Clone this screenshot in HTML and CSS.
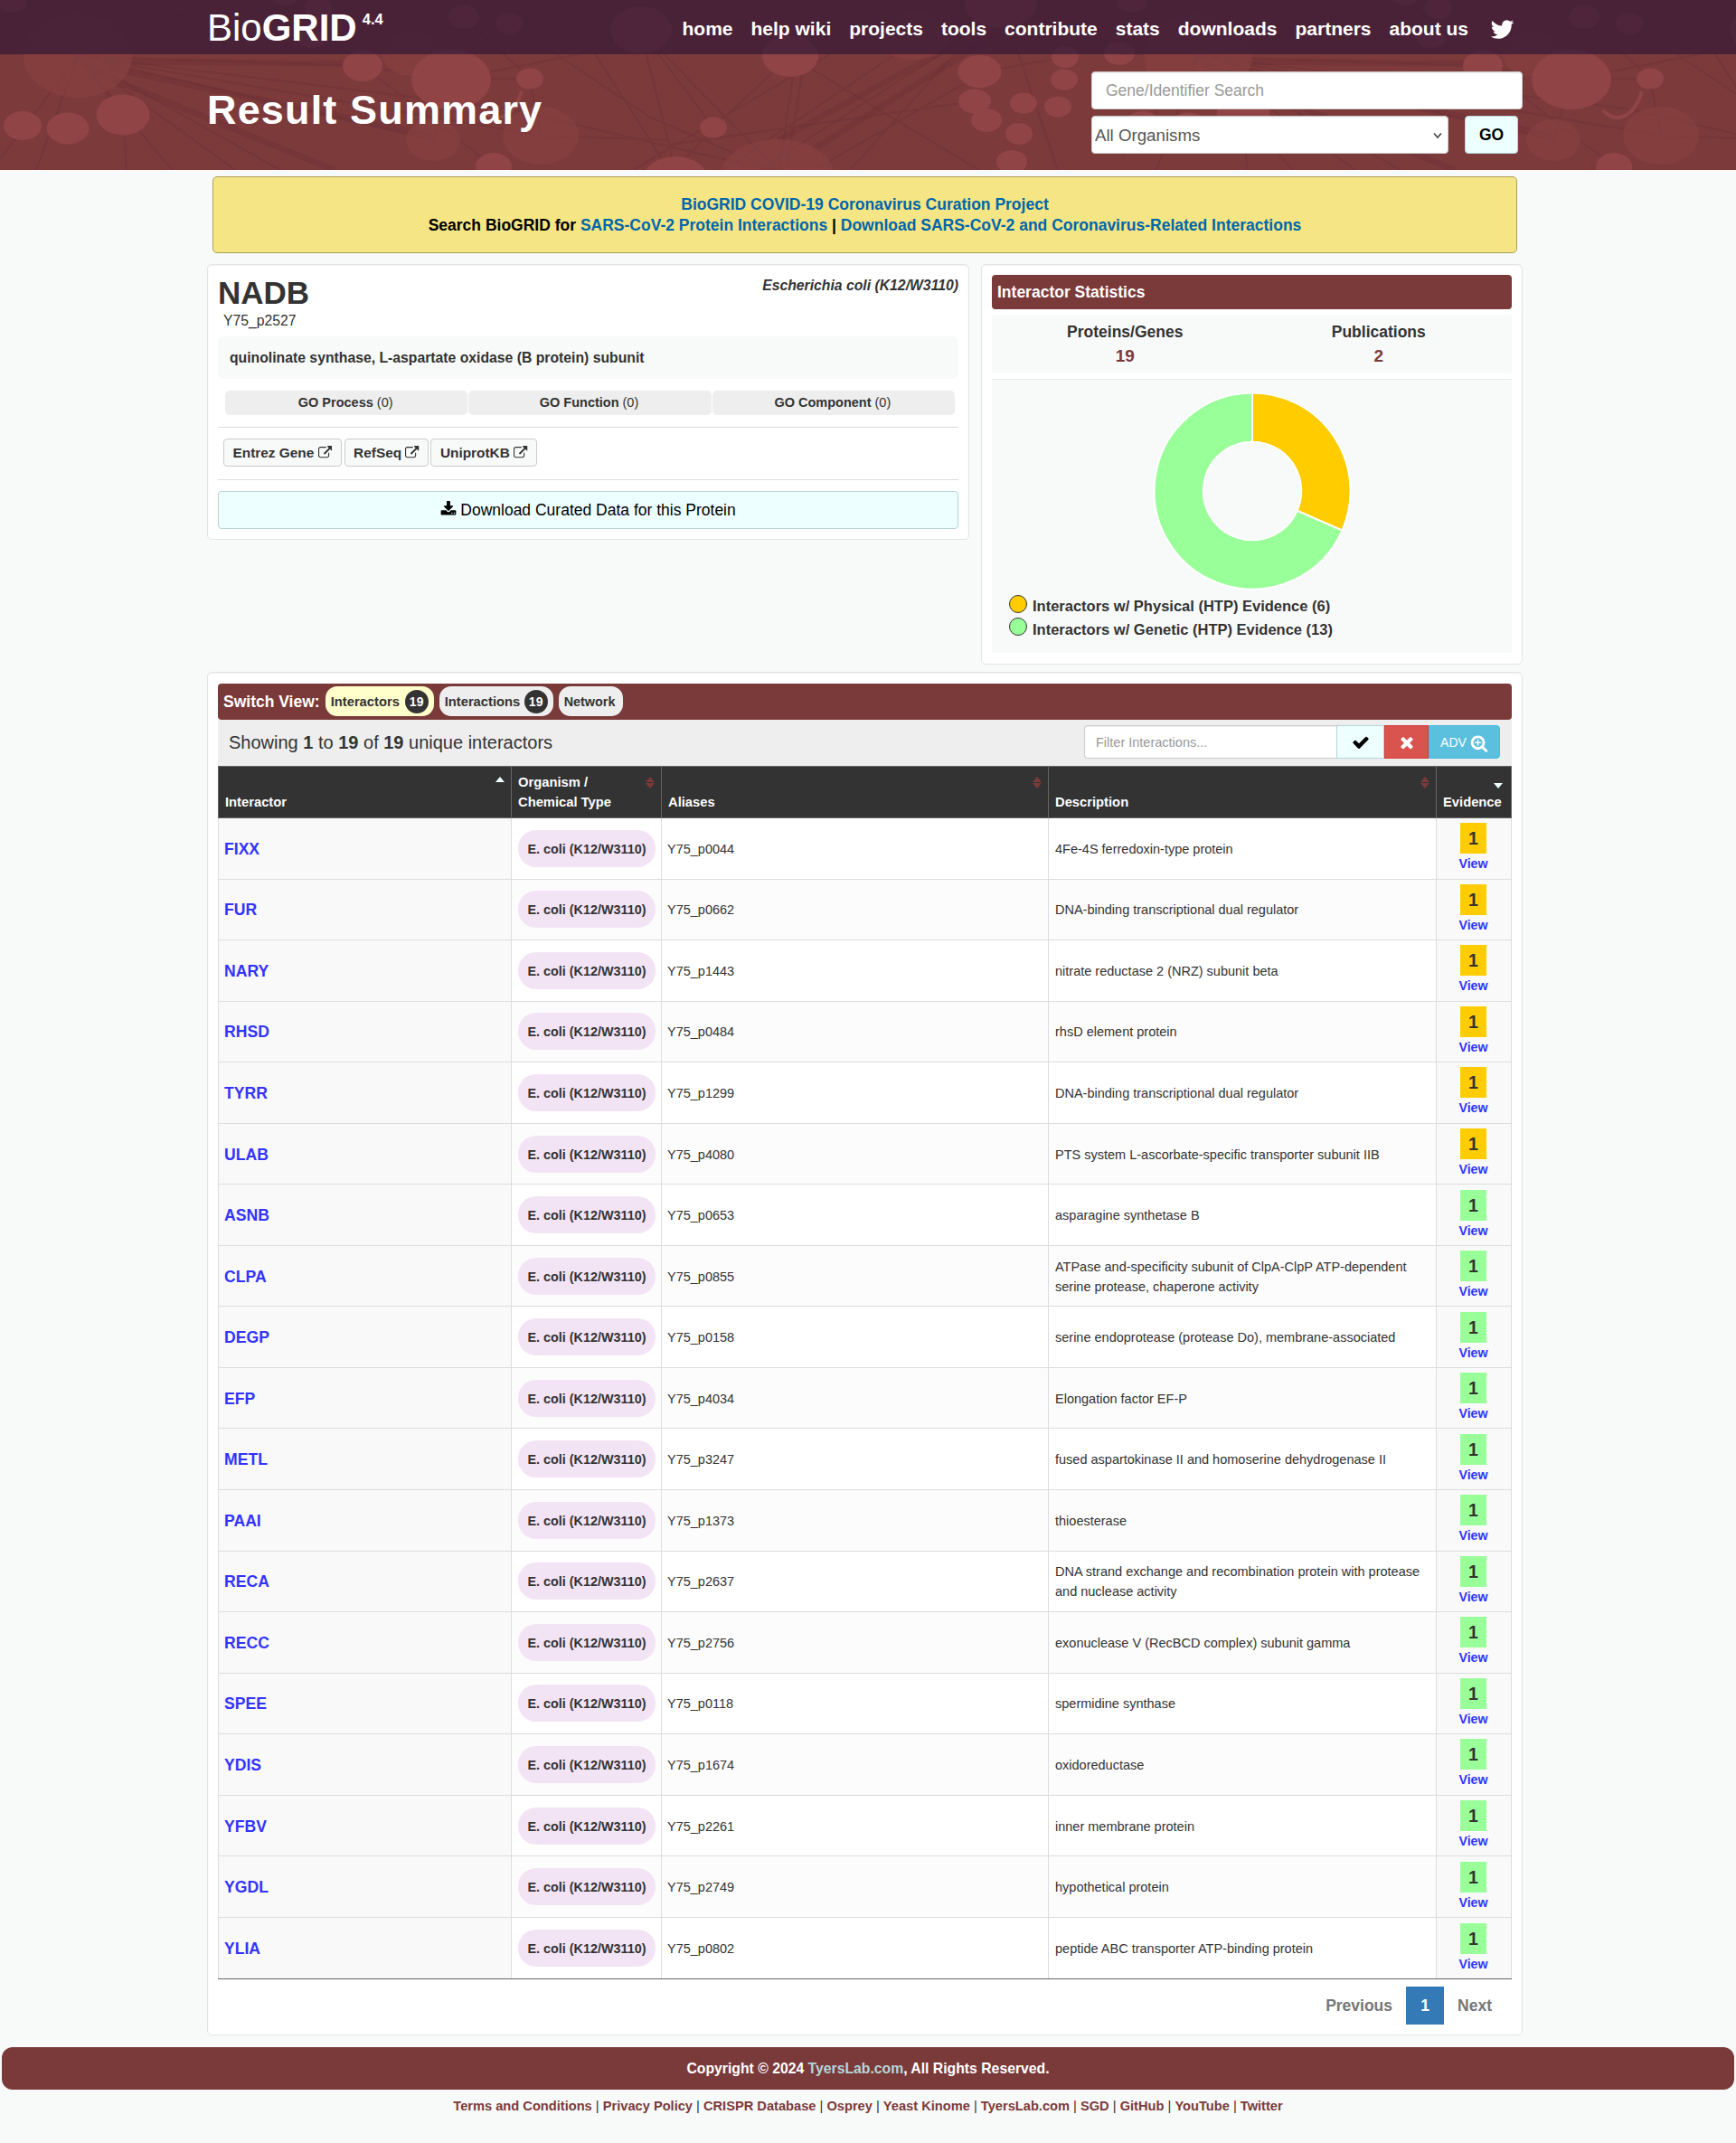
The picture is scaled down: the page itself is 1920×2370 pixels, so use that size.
FILE: index.html
```html
<!DOCTYPE html>
<html lang="en">
<head>
<meta charset="utf-8">
<title>NADB Result Summary | BioGRID</title>
<link rel="stylesheet" href="styles.css">
</head>
<body>
<svg class="sprite" aria-hidden="true">
  <symbol id="i-ext" viewBox="0 0 1792 1792"><path d="M1408 928v320q0 119-84.5 203.5t-203.5 84.5h-832q-119 0-203.5-84.5t-84.5-203.5v-832q0-119 84.5-203.5t203.5-84.5h704q14 0 23 9t9 23v64q0 14-9 23t-23 9h-704q-66 0-113 47t-47 113v832q0 66 47 113t113 47h832q66 0 113-47t47-113v-320q0-14 9-23t23-9h64q14 0 23 9t9 23zm384-864v512q0 26-19 45t-45 19-45-19l-176-176-652 652q-10 10-23 10t-23-10l-114-114q-10-10-10-23t10-23l652-652-176-176q-19-19-19-45t19-45 45-19h512q26 0 45 19t19 45z"/></symbol>
  <symbol id="i-dl" viewBox="0 0 1792 1792"><path d="M1344 1344q0-26-19-45t-45-19-45 19-19 45 19 45 45 19 45-19 19-45zm256 0q0-26-19-45t-45-19-45 19-19 45 19 45 45 19 45-19 19-45zm128-224v320q0 40-28 68t-68 28h-1472q-40 0-68-28t-28-68v-320q0-40 28-68t68-28h465l135 136q58 56 136 56t136-56l136-136h464q40 0 68 28t28 68zm-325-569q17 41-14 70l-448 448q-18 19-45 19t-45-19l-448-448q-31-29-14-70 17-39 59-39h256v-448q0-26 19-45t45-19h256q26 0 45 19t19 45v448h256q42 0 59 39z"/></symbol>
  <symbol id="i-check" viewBox="0 0 1792 1792"><path d="M1671 566q0 40-28 68l-724 724-136 136q-28 28-68 28t-68-28l-136-136-362-362q-28-28-28-68t28-68l136-136q28-28 68-28t68 28l294 295 656-657q28-28 68-28t68 28l136 136q28 28 28 68z"/></symbol>
  <symbol id="i-times" viewBox="0 0 1792 1792"><path d="M1490 1322q0 40-28 68l-136 136q-28 28-68 28t-68-28l-294-294-294 294q-28 28-68 28t-68-28l-136-136q-28-28-28-68t28-68l294-294-294-294q-28-28-28-68t28-68l136-136q28-28 68-28t68 28l294 294 294-294q28-28 68-28t68 28l136 136q28 28 28 68t-28 68l-294 294 294 294q28 28 28 68z"/></symbol>
  <symbol id="i-zoom" viewBox="0 0 1792 1792"><path d="M1088 800v64q0 13-9.5 22.5t-22.5 9.5h-224v224q0 13-9.5 22.5t-22.5 9.5h-64q-13 0-22.5-9.5t-9.5-22.5v-224h-224q-13 0-22.5-9.5t-9.5-22.5v-64q0-13 9.5-22.5t22.5-9.5h224v-224q0-13 9.5-22.5t22.5-9.5h64q13 0 22.5 9.5t9.5 22.5v224h224q13 0 22.5 9.5t9.5 22.5zm128 32q0-185-131.5-316.5t-316.5-131.5-316.5 131.5-131.5 316.5 131.5 316.5 316.5 131.5 316.5-131.5 131.5-316.5zm512 832q0 53-37.5 90.5t-90.5 37.5q-54 0-90-38l-343-342q-179 124-399 124-143 0-273.5-55.5t-225-150-150-225-55.5-273.5 55.5-273.5 150-225 225-150 273.5-55.5 273.5 55.5 225 150 150 225 55.5 273.5q0 220-124 399l343 343q37 37 37 90z"/></symbol>
  <symbol id="i-tw" viewBox="0 0 1792 1792"><path d="M1684 408q-67 98-162 167 1 14 1 42 0 130-38 259.5t-115.5 248.5-184.5 210.5-258 146-323 54.5q-271 0-496-145 35 4 78 4 225 0 401-138-105-2-188-64.5t-114-159.5q33 5 61 5 43 0 85-11-112-23-185.5-111.5t-73.5-205.5v-4q68 38 146 41-66-44-105-115t-39-154q0-88 44-163 121 149 294.5 238.5t371.5 99.5q-8-38-8-74 0-134 94.5-228.5t228.5-94.5q140 0 236 102 109-21 205-78-37 115-142 178 93-10 186-50z"/></symbol>
</svg>

<header class="masthead">
  <svg class="network" width="1920" height="188" aria-hidden="true">
    <g id="net">
      <g class="edges">
        <path d="M86 62L1 175M86 62L40 188M86 62L136 127L140 188M86 62L190 188M86 62L260 188M86 62L310 188M86 62L401 73L499 88L586 87M86 62L479 155M86 62L598 150L740 155M86 62L560 120L860 190M352 30L499 88L479 155M499 88L640 60L708 33L747 188M708 33L789 141L747 188M874 62L789 141M708 33L860 188M316 0L401 73L546 184M563 25L720 130L860 190M880 62L862 188M890 62L870 188M874 62L1083 188M840 188L1040 60L1107 3M800 188L990 60L1107 3M900 188L1090 79L1178 63M940 188L1107 3L1170 188M1107 3L1239 59M740 160L1078 112M620 0L740 188M1020 0L700 188M513 19L586 87L598 150M0 30L86 62L60 0M86 62L130 0M86 62L240 0M0 60H86"/>
        <path class="thick" d="M110 68L390 70M120 75L478 150M105 80L370 188M860 155L1040 58M900 165L1090 45"/>
      </g>
      <g class="faint">
        <ellipse cx="86" cy="62" rx="60" ry="46"/><ellipse cx="479" cy="155" rx="30" ry="23"/><ellipse cx="598" cy="150" rx="42" ry="32"/><ellipse cx="860" cy="192" rx="62" ry="38"/><ellipse cx="455" cy="60" rx="32" ry="24"/><ellipse cx="1010" cy="40" rx="40" ry="26"/>
      </g>
      <g class="nodes">
        <ellipse cx="13" cy="3" rx="16" ry="11"/><ellipse cx="25" cy="139" rx="21" ry="16"/><ellipse cx="75" cy="142" rx="23.500" ry="17.500"/><ellipse cx="136" cy="127" rx="29.500" ry="22.500"/><ellipse cx="401" cy="73" rx="22" ry="17"/><ellipse cx="499" cy="88" rx="44" ry="33"/><ellipse cx="586" cy="87" rx="15" ry="11.500"/><ellipse cx="546" cy="184" rx="20" ry="15"/><ellipse cx="352" cy="9" rx="15" ry="12"/><ellipse cx="316" cy="-5" rx="15" ry="11"/><ellipse cx="344" cy="43" rx="16" ry="10"/><ellipse cx="513" cy="19" rx="17" ry="13"/><ellipse cx="563" cy="26" rx="15" ry="11.500"/><ellipse cx="709" cy="33" rx="34" ry="26"/><ellipse cx="874" cy="62" rx="31" ry="23"/><ellipse cx="789" cy="141" rx="15" ry="11.500"/><ellipse cx="747" cy="197" rx="35" ry="24"/><ellipse cx="1083.500" cy="79" rx="24" ry="18"/><ellipse cx="1078" cy="112" rx="18" ry="13.500"/><ellipse cx="1091" cy="133" rx="17" ry="13"/><ellipse cx="1132" cy="114" rx="15" ry="11.500"/><ellipse cx="1127" cy="148" rx="15" ry="12"/><ellipse cx="1119" cy="179" rx="17" ry="13"/><ellipse cx="1178" cy="63" rx="15" ry="12"/><ellipse cx="1177" cy="88" rx="15" ry="11.500"/><ellipse cx="1170" cy="118" rx="15" ry="11.500"/><ellipse cx="1238" cy="59" rx="17" ry="13"/><ellipse cx="1107" cy="3" rx="40" ry="28"/>
      </g>
      <path class="tail" d="M577 101C568 130 548 138 534 122"/>
    </g>
    <use href="#net" x="1239"/>
  </svg>
  <div class="topbar"><div class="wrap topbar-in">
    <div class="logo">Bio<b>GRID</b><sup>4.4</sup></div>
    <nav class="nav"><a>home</a><a>help wiki</a><a>projects</a><a>tools</a><a>contribute</a><a>stats</a><a>downloads</a><a>partners</a><a>about us</a><svg class="tw"><use href="#i-tw"/></svg></nav>
  </div></div>
  <div class="wrap banner">
    <h1>Result Summary</h1>
    <form class="search">
      <input class="field" placeholder="Gene/Identifier Search">
      <div class="search-row"><div class="pick"><select class="field"><option>All Organisms</option></select><svg class="chev" viewBox="0 0 10 8"><path d="M1 1.500L5 6L9 1.500"/></svg></div><button type="button" class="go">GO</button></div>
    </form>
  </div>
</header>

<main class="wrap">
  <div class="notice"><div><a>BioGRID COVID-19 Coronavirus Curation Project</a></div><div>Search BioGRID for <a>SARS-CoV-2 Protein Interactions</a> | <a>Download SARS-CoV-2 and Coronavirus-Related Interactions</a></div></div>

  <div class="top-cards">
    <section class="card protein">
      <div class="protein-head"><h2>NADB</h2><em>Escherichia coli (K12/W3110)</em></div>
      <div class="alias">Y75_p2527</div>
      <div class="desc">quinolinate synthase, L-aspartate oxidase (B protein) subunit</div>
      <div class="go-terms"><div><b>GO Process</b> (0)</div><div><b>GO Function</b> (0)</div><div><b>GO Component</b> (0)</div></div>
      <div class="links"><a>Entrez Gene <svg><use href="#i-ext"/></svg></a><a class="refseq">RefSeq <svg><use href="#i-ext"/></svg></a><a>UniprotKB <svg><use href="#i-ext"/></svg></a></div>
      <div class="download"><svg><use href="#i-dl"/></svg>Download Curated Data for this Protein</div>
    </section>

    <section class="card stats">
      <h3>Interactor Statistics</h3>
      <div class="counts"><div>Proteins/Genes<strong>19</strong></div><div>Publications<strong>2</strong></div></div>
      <div class="chart">
        <svg class="donut" viewBox="-110 -110 220 220">
          <path fill="#fc0" d="M0 -108.500A108.500 108.500 0 0 1 99.400 43.600L49.700 21.800A54.250 54.250 0 0 0 0 -54.250Z"/>
          <path fill="#9f9" d="M99.400 43.600A108.500 108.500 0 1 1 0 -108.500L0 -54.250A54.250 54.250 0 1 0 49.700 21.800Z"/>
        </svg>
        <ul class="legend"><li><i class="phys"></i>Interactors w/ Physical (HTP) Evidence (6)</li><li><i class="gen"></i>Interactors w/ Genetic (HTP) Evidence (13)</li></ul>
      </div>
    </section>
  </div>

  <section class="card results">
    <div class="views"><span>Switch View:</span><a class="on">Interactors<i>19</i></a><a class="mid">Interactions<i>19</i></a><a class="last">Network</a></div>
    <div class="tools">
      <div>Showing <b>1</b> to <b>19</b> of <b>19</b> unique interactors</div>
      <div class="filter"><input placeholder="Filter Interactions..."><button type="button" class="ok"><svg><use href="#i-check"/></svg></button><button type="button" class="no"><svg><use href="#i-times"/></svg></button><button type="button" class="adv">ADV<svg><use href="#i-zoom"/></svg></button></div>
    </div>
    <table>
      <colgroup><col class="c1"><col class="c2"><col class="c3"><col class="c4"><col class="c5"></colgroup>
      <thead><tr><th class="asc">Interactor</th><th class="both">Organism /<br>Chemical Type</th><th class="both">Aliases</th><th class="both">Description</th><th class="dsc">Evidence</th></tr></thead>
      <tbody>
      <tr><td>FIXX</td><td><span>E. coli (K12/W3110)</span></td><td>Y75_p0044</td><td>4Fe-4S ferredoxin-type protein</td><td><b class="phys">1</b><a>View</a></td></tr>
      <tr><td>FUR</td><td><span>E. coli (K12/W3110)</span></td><td>Y75_p0662</td><td>DNA-binding transcriptional dual regulator</td><td><b class="phys">1</b><a>View</a></td></tr>
      <tr><td>NARY</td><td><span>E. coli (K12/W3110)</span></td><td>Y75_p1443</td><td>nitrate reductase 2 (NRZ) subunit beta</td><td><b class="phys">1</b><a>View</a></td></tr>
      <tr><td>RHSD</td><td><span>E. coli (K12/W3110)</span></td><td>Y75_p0484</td><td>rhsD element protein</td><td><b class="phys">1</b><a>View</a></td></tr>
      <tr><td>TYRR</td><td><span>E. coli (K12/W3110)</span></td><td>Y75_p1299</td><td>DNA-binding transcriptional dual regulator</td><td><b class="phys">1</b><a>View</a></td></tr>
      <tr><td>ULAB</td><td><span>E. coli (K12/W3110)</span></td><td>Y75_p4080</td><td>PTS system L-ascorbate-specific transporter subunit IIB</td><td><b class="phys">1</b><a>View</a></td></tr>
      <tr><td>ASNB</td><td><span>E. coli (K12/W3110)</span></td><td>Y75_p0653</td><td>asparagine synthetase B</td><td><b class="gen">1</b><a>View</a></td></tr>
      <tr><td>CLPA</td><td><span>E. coli (K12/W3110)</span></td><td>Y75_p0855</td><td>ATPase and-specificity subunit of ClpA-ClpP ATP-dependent serine protease, chaperone activity</td><td><b class="gen">1</b><a>View</a></td></tr>
      <tr><td>DEGP</td><td><span>E. coli (K12/W3110)</span></td><td>Y75_p0158</td><td>serine endoprotease (protease Do), membrane-associated</td><td><b class="gen">1</b><a>View</a></td></tr>
      <tr><td>EFP</td><td><span>E. coli (K12/W3110)</span></td><td>Y75_p4034</td><td>Elongation factor EF-P</td><td><b class="gen">1</b><a>View</a></td></tr>
      <tr><td>METL</td><td><span>E. coli (K12/W3110)</span></td><td>Y75_p3247</td><td>fused aspartokinase II and homoserine dehydrogenase II</td><td><b class="gen">1</b><a>View</a></td></tr>
      <tr><td>PAAI</td><td><span>E. coli (K12/W3110)</span></td><td>Y75_p1373</td><td>thioesterase</td><td><b class="gen">1</b><a>View</a></td></tr>
      <tr><td>RECA</td><td><span>E. coli (K12/W3110)</span></td><td>Y75_p2637</td><td>DNA strand exchange and recombination protein with protease and nuclease activity</td><td><b class="gen">1</b><a>View</a></td></tr>
      <tr><td>RECC</td><td><span>E. coli (K12/W3110)</span></td><td>Y75_p2756</td><td>exonuclease V (RecBCD complex) subunit gamma</td><td><b class="gen">1</b><a>View</a></td></tr>
      <tr><td>SPEE</td><td><span>E. coli (K12/W3110)</span></td><td>Y75_p0118</td><td>spermidine synthase</td><td><b class="gen">1</b><a>View</a></td></tr>
      <tr><td>YDIS</td><td><span>E. coli (K12/W3110)</span></td><td>Y75_p1674</td><td>oxidoreductase</td><td><b class="gen">1</b><a>View</a></td></tr>
      <tr><td>YFBV</td><td><span>E. coli (K12/W3110)</span></td><td>Y75_p2261</td><td>inner membrane protein</td><td><b class="gen">1</b><a>View</a></td></tr>
      <tr><td>YGDL</td><td><span>E. coli (K12/W3110)</span></td><td>Y75_p2749</td><td>hypothetical protein</td><td><b class="gen">1</b><a>View</a></td></tr>
      <tr><td>YLIA</td><td><span>E. coli (K12/W3110)</span></td><td>Y75_p0802</td><td>peptide ABC transporter ATP-binding protein</td><td><b class="gen">1</b><a>View</a></td></tr>
      </tbody>
    </table>
    <div class="pager"><a>Previous</a><a class="cur">1</a><a>Next</a></div>
  </section>
</main>

<footer>
  <div class="copy">Copyright © 2024 <a>TyersLab.com</a>, All Rights Reserved.</div>
  <div class="foot-links"><a>Terms and Conditions</a> | <a>Privacy Policy</a> | <a>CRISPR Database</a> | <a>Osprey</a> | <a>Yeast Kinome</a> | <a>TyersLab.com</a> | <a>SGD</a> | <a>GitHub</a> | <a>YouTube</a> | <a>Twitter</a></div>
</footer>
</body>
</html>
```
FILE: styles.css
```css
* { box-sizing: border-box; }
body { margin: 0; height: 2370px; background: #f8faf9; color: #333; font-family: "Liberation Sans", Arial, Helvetica, sans-serif; font-size: 17.5px; }
h1, h2, h3, ul { margin: 0; padding: 0; }
button, input, select { font-family: inherit; margin: 0; }
svg { fill: currentColor; }
.sprite { display: none; }
.wrap { width: 1455px; margin: 0 236px 0 229px; }

/* masthead */
.masthead { position: relative; height: 188px; background: #7d3a3b; overflow: hidden; color: #fff; }
.network { position: absolute; left: 0; top: 0; }
.edges { fill: none; stroke: #5c2a30; stroke-opacity: .22; stroke-width: 2; }
.edges .thick { stroke-width: 7; stroke-opacity: .2; }
.faint { fill: #84403f; fill-opacity: .8; }
.nodes { fill: #904446; }
.tail { fill: none; stroke: #904446; stroke-width: 4; }
.topbar { position: relative; height: 60px; background: rgba(54, 25, 55, .72); }
.topbar-in { display: flex; justify-content: space-between; height: 60px; }
.logo { font-size: 42px; line-height: 61px; white-space: nowrap; display: flex; }
.logo sup { font-size: 16.5px; font-weight: bold; line-height: 43px; margin-left: 6px; }
.nav { display: flex; gap: 20px; font-size: 21px; font-weight: bold; line-height: 64px; white-space: nowrap; }
.tw { width: 29px; height: 29px; margin: 18px 8px 0 3px; }
.banner { position: relative; display: flex; justify-content: space-between; height: 128px; }
h1 { font-size: 45px; letter-spacing: 1.15px; line-height: 124px; }
.search { width: 477px; padding-top: 19px; }
.field { display: block; width: 100%; height: 42px; border: 1px solid #ccc; border-radius: 4px; background: #fff; box-shadow: inset 0 1px 1px rgba(0, 0, 0, .075); color: #555; font-size: 17.5px; padding: 0 15px; }
input::placeholder { color: #999; opacity: 1; }
.search-row { display: flex; gap: 18px; margin-top: 7px; }
.pick { position: relative; width: 395px; }
select.field { appearance: none; font-size: 18.7px; padding: 0 0 0 3px; }
.chev { position: absolute; right: 7px; top: 18px; width: 10px; height: 8px; fill: none; stroke: #444; stroke-width: 1.6; }
.go { width: 59px; height: 42px; border: 1px solid #b5d5d8; border-radius: 4px; background: #edffff; color: #000; font-size: 17.5px; font-weight: bold; padding: 0; }

/* notice */
.notice { margin: 7px 6px 12px; height: 85px; padding-top: 19px; border: 1px solid #a9a158; border-radius: 5px; background: #f5e585; color: #000; text-align: center; font-weight: bold; line-height: 23.3px; }
.notice a { color: #06a; }

/* cards */
.card { background: #fff; border: 1px solid #e3e5e4; border-radius: 5px; box-shadow: inset 0 1px 2px rgba(0, 0, 0, .06); }
.top-cards { display: flex; justify-content: space-between; align-items: flex-start; }
.protein { width: 843px; height: 305px; padding: 11px; }
.protein-head { display: flex; justify-content: space-between; height: 41px; }
h2 { font-size: 35px; line-height: 39px; }
.protein-head em { font-size: 15.75px; font-weight: bold; line-height: 24px; }
.alias { font-size: 15.75px; line-height: 20px; margin-left: 6px; }
.desc { height: 47px; margin-top: 7px; padding-left: 13px; border-radius: 6px; background: #f8faf9; font-size: 15.75px; font-weight: bold; line-height: 47px; }
.go-terms { display: flex; gap: 1px; margin: 13px 4px 13px 8px; }
.go-terms div { flex: 1; height: 27px; padding-right: 2px; border-radius: 5px; background: #eee; text-align: center; font-size: 14.5px; line-height: 26px; }
.links { display: flex; gap: 3px; height: 59px; padding: 12px 6px 0; border-top: 1px solid #ddd; border-bottom: 1px solid #ddd; }
.links a { height: 31px; padding: 0 9.5px; border: 1px solid #ccc; border-radius: 4px; background: #f8faf9; font-size: 15.4px; font-weight: bold; line-height: 30px; white-space: nowrap; }
.links .refseq { margin-right: -1px; }
.links svg { width: 15.5px; height: 15.5px; vertical-align: -2.5px; }
.download { display: flex; justify-content: center; align-items: center; gap: 4px; height: 42px; margin-top: 12px; border: 1px solid #b5d5d8; border-radius: 4px; background: #edffff; color: #000; }
.download svg { width: 18px; height: 18px; margin-top: -2px; }

.stats { width: 599px; height: 443px; padding: 11px; }
h3 { height: 38px; padding-left: 6px; border-radius: 4px; background: #7b3a3a; color: #fff; font-size: 17.5px; line-height: 38px; }
.counts { display: flex; height: 65px; margin-top: 6px; background: #f8faf9; text-align: center; font-weight: bold; padding: 6px 7px 0; }
.counts div { flex: 1; line-height: 26px; }
.counts strong { display: block; color: #7b3a3a; font-size: 19px; line-height: 28px; }
.chart { height: 303px; margin-top: 6px; border-top: 1px solid #e8eaea; background: #f8faf9; padding-top: 13px; }
.donut { display: block; width: 220px; height: 220px; margin: 0 auto; stroke: #fff; stroke-width: 2; }
.legend { list-style: none; padding-left: 19px; margin-top: 2px; font-size: 16.5px; font-weight: bold; }
.legend li { display: flex; gap: 6px; height: 26px; line-height: 30px; }
.legend i { width: 20px; height: 20px; margin-top: 3px; border: 1px solid #333; border-radius: 50%; }
.legend li + li i { margin-top: 2px; }
.phys { background: #fc0; }
.gen { background: #9f9; }

/* results */
.results { height: 1508px; margin-top: 8px; padding: 12px 11px; }
.views { display: flex; align-items: center; gap: 6px; height: 40px; padding-left: 6px; border-radius: 4px; background: #7b3a3a; color: #fff; font-weight: bold; }
.views a { display: flex; align-items: center; justify-content: space-between; width: 120px; height: 33px; margin-top: -1px; padding: 0 6px; border-radius: 13px; background: #eee; color: #333; font-size: 14.75px; }
.views a.on { background: #ffc; }
.views a.mid { width: 126px; }
.views a.last { width: 71px; font-size: 14.4px; }
.views i { width: 26px; height: 26px; border-radius: 50%; background: #333; color: #fff; font-size: 14px; font-style: normal; line-height: 26px; text-align: center; }
.tools { display: flex; justify-content: space-between; height: 51px; padding: 6px 13px 6px 12px; background: #eee; font-size: 20px; line-height: 38px; }
.filter { display: flex; height: 37px; }
.filter input { width: 279px; border: 1px solid #ccc; border-radius: 4px 0 0 4px; border-right: 0; padding: 0 12px; font-size: 14.5px; box-shadow: inset 0 1px 1px rgba(0, 0, 0, .075); }
.filter button { display: flex; align-items: center; justify-content: center; padding: 0; }
.filter svg { width: 20px; height: 20px; }
.ok { width: 53px; background: #edffff; border: 1px solid #b5d5d8; color: #000; }
.no { width: 49px; background: #d9534f; border: 1px solid #d43f3a; color: #fff; }
.adv { width: 79px; gap: 4px; background: #5bc0de; border: 1px solid #46b8da; border-radius: 0 4px 4px 0; color: #fff; font-size: 14px; }
.adv svg { margin-top: 2px; }
table { width: 1431px; table-layout: fixed; border-collapse: separate; border-spacing: 0; font-size: 14.5px; line-height: 22px; border-bottom: 1px solid #666; }
.c1 { width: 325px; } .c2 { width: 166px; } .c3 { width: 428px; } .c4 { width: 429px; } .c5 { width: 83px; }
th { position: relative; height: 58px; padding: 0 7px 6px; background: #333; border: 1px solid #666; border-left-width: 0; color: #fff; font-size: 14.75px; line-height: 22px; text-align: left; vertical-align: bottom; white-space: nowrap; }
th:first-child { border-left-width: 1px; }
th::before, th::after { position: absolute; right: 7px; border: 5px solid transparent; }
.asc::before, .both::before { content: ""; top: 11px; border-top: 0; border-bottom: 6px solid #7b3a3a; }
.both::after, .dsc::after { content: ""; top: 18px; border-bottom: 0; border-top: 6px solid #7b3a3a; }
.asc::before { border-bottom-color: #edffff; }
.dsc::after { border-top-color: #edffff; right: 9px; }
td { height: 67.56px; padding: 1px 7px 0; border-right: 1px solid #ddd; border-bottom: 1px solid #ddd; vertical-align: middle; }
tr:last-child td { border-bottom: 0; }
tbody tr:nth-child(even) { background: #fcfcfc; }
td:first-child { background: #f9f9f9; border-left: 1px solid #ddd; color: #33f; font-size: 17.6px; font-weight: bold; padding-left: 6px; }
td:nth-child(2) { padding-top: 0; }
td:nth-child(2) span { display: block; width: 152px; height: 41px; border-radius: 20px; background: #f3e4f5; font-size: 14.4px; font-weight: bold; line-height: 42px; text-align: center; white-space: nowrap; }
td:nth-child(3) { padding-left: 6px; }
td:last-child { background: #f9f9f9; text-align: center; padding: 0 1px 0 0; }
td b { display: block; width: 29px; height: 34px; margin: 0 auto; font-size: 19.5px; line-height: 34px; }
td a { display: block; color: #33f; font-size: 14.2px; font-weight: bold; line-height: 22px; }
.pager { display: flex; justify-content: flex-end; align-items: center; height: 42px; margin: 8px 22px 0; gap: 15px; color: #777; font-weight: bold; }
.pager .cur { width: 42px; height: 42px; background: #337ab7; color: #fff; line-height: 42px; text-align: center; }

/* footer */
footer { text-align: center; }
.copy { height: 47px; margin: 13px 2px 0; border-radius: 12px; background: #7b3a3a; color: #fff; font-size: 15.75px; font-weight: bold; line-height: 47px; }
.copy a { color: #b5d5d8; }
.foot-links { font-size: 14.65px; line-height: 36px; }
.foot-links a { color: #7b3a3a; font-weight: bold; }
```
